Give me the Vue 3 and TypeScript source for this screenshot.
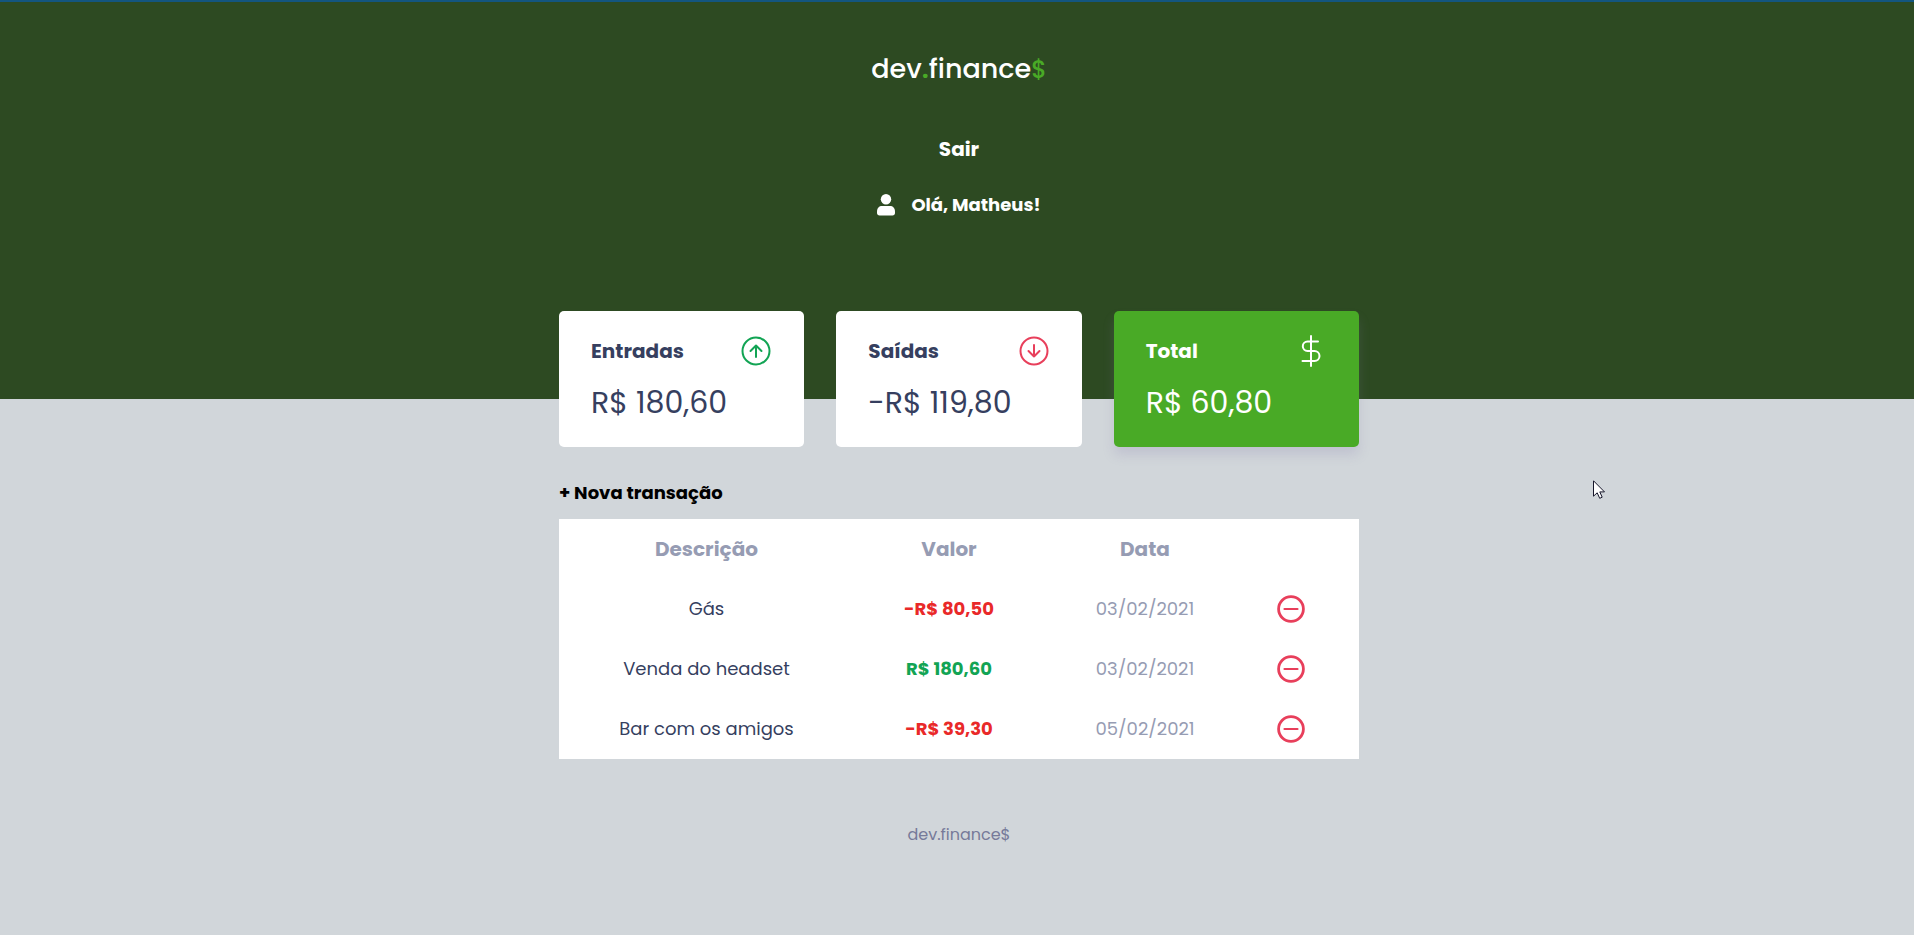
<script setup lang="ts">
interface Transaction {
  id: number
  description: string
  amount: number
  date: string
}

const userName = 'Matheus'

const transactions: Transaction[] = [
  { id: 1, description: 'Gás', amount: -8050, date: '03/02/2021' },
  { id: 2, description: 'Venda do headset', amount: 18060, date: '03/02/2021' },
  { id: 3, description: 'Bar com os amigos', amount: -3930, date: '05/02/2021' },
]

const sum = (items: Transaction[]): number => items.reduce((acc, t) => acc + t.amount, 0)
const incomes = sum(transactions.filter((t) => t.amount > 0))
const expenses = sum(transactions.filter((t) => t.amount < 0))
const total = incomes + expenses

function formatCurrency(cents: number): string {
  const sign = cents < 0 ? '-' : ''
  return `${sign}R$ ${(Math.abs(cents) / 100).toFixed(2).replace('.', ',')}`
}
</script>

<template>
  <div class="page">
    <header class="header">
      <h1 class="logo">dev<span class="dot">.</span>finance<span class="dollar">$</span></h1>
      <a class="logout" href="#">Sair</a>
      <div class="user">
        <svg class="user-icon" viewBox="0 0 18 22" aria-hidden="true">
          <circle cx="9" cy="5.2" r="5.2" />
          <path d="M0 17.5C0 14 2.200 12 5 12h8c2.800 0 5 2 5 5.500v1.500c0 1.500-1 2.500-2.500 2.500h-13C1 21.500 0 20.500 0 19z" />
        </svg>
        <span>Olá, {{ userName }}!</span>
      </div>
    </header>

    <main class="container">
      <section class="balance" aria-label="Balanço">
        <div class="card">
          <h2 class="card-title">
            <span>Entradas</span>
            <svg class="card-icon income" viewBox="0 0 32 32" aria-hidden="true">
              <circle cx="16" cy="16" r="13.500" />
              <path d="M16 22V10.500M10.500 16L16 10.500L21.500 16" />
            </svg>
          </h2>
          <p class="card-value">{{ formatCurrency(incomes) }}</p>
        </div>
        <div class="card">
          <h2 class="card-title">
            <span>Saídas</span>
            <svg class="card-icon expense" viewBox="0 0 32 32" aria-hidden="true">
              <circle cx="16" cy="16" r="13.500" />
              <path d="M16 10V21.500M10.500 16L16 21.500L21.500 16" />
            </svg>
          </h2>
          <p class="card-value">{{ formatCurrency(expenses) }}</p>
        </div>
        <div class="card total">
          <h2 class="card-title">
            <span>Total</span>
            <svg class="card-icon" viewBox="0 0 32 32" aria-hidden="true">
              <path d="M16 1V31M23 6.500H12.500a4.700 4.700 0 0 0 0 9.400H19.500a5 5 0 0 1 0 10H7.500" />
            </svg>
          </h2>
          <p class="card-value">{{ formatCurrency(total) }}</p>
        </div>
      </section>

      <section aria-label="Transações">
        <button class="new" type="button">+ Nova transação</button>
        <table class="table">
          <colgroup>
            <col />
            <col class="col-value" />
            <col class="col-date" />
            <col class="col-action" />
          </colgroup>
          <thead>
            <tr>
              <th scope="col">Descrição</th>
              <th scope="col">Valor</th>
              <th scope="col">Data</th>
              <td></td>
            </tr>
          </thead>
          <tbody>
            <tr v-for="t in transactions" :key="t.id">
              <td>{{ t.description }}</td>
              <td class="amount" :class="t.amount < 0 ? 'negative' : 'positive'">{{ formatCurrency(t.amount) }}</td>
              <td class="date">{{ t.date }}</td>
              <td class="action">
                <button class="remove" type="button" aria-label="Remover transação">
                  <svg viewBox="0 0 28 28" aria-hidden="true">
                    <circle cx="14" cy="14" r="12.400" stroke-width="2.800" />
                    <path d="M7.500 14H20.500" stroke-width="2.200" />
                  </svg>
                </button>
              </td>
            </tr>
          </tbody>
        </table>
      </section>
    </main>

    <footer class="footer">dev.finance$</footer>

    <svg class="pointer" viewBox="0 0 12 19" aria-hidden="true">
      <path d="M.5.8V16.200L4.200 12.800L6.700 18.300L9.200 17.200L6.800 11.900H11.500Z" />
    </svg>
  </div>
</template>

<style>
body {
  margin: 0;
  background: #d1d6da;
}
</style>

<style scoped>
.page {
  position: relative;
  min-height: 100vh;
  box-sizing: border-box;
  overflow: hidden;
  background: #d1d6da;
  color: #363f5f;
  font-family: Poppins, Inter, "Open Sans", sans-serif;
  font-size: 18px;
}

.header {
  display: flex;
  flex-direction: column;
  align-items: center;
  box-sizing: border-box;
  height: 399px;
  padding: 47px 0 0 4px;
  border-top: 2px solid #135680;
  background: #2d4a22;
  color: #fff;
}

.logo {
  margin: 0;
  font-size: 27px;
  font-weight: 500;
  line-height: 40px;
}

.dot,
.dollar {
  color: #49aa26;
}

.dot {
  font-weight: 600;
}

.dollar {
  font-size: 24px;
}

.logout {
  margin-top: 44px;
  color: inherit;
  font-size: 20px;
  font-weight: 700;
  line-height: 30px;
  text-decoration: none;
}

.user {
  display: flex;
  align-items: center;
  gap: 16px;
  margin-top: 26px;
  font-weight: 700;
  line-height: 30px;
}

.user-icon {
  width: 18px;
  height: 22px;
  fill: #fff;
}

.container {
  width: min(90vw, 800px);
  margin: -88px auto 0;
  padding-left: 4px;
}

.balance {
  display: grid;
  grid-template-columns: repeat(3, 1fr);
  gap: 32px;
}

.card {
  padding: 24px 32px;
  border-radius: 5px;
  background: #fff;
}

.card.total {
  background: #49aa26;
  color: #fff;
  box-shadow: 0 8px 12px rgba(130, 120, 170, 0.2);
}

.card-title {
  display: flex;
  align-items: center;
  justify-content: space-between;
  margin: 0;
  font-size: 20px;
  font-weight: 700;
  line-height: 32px;
}

.card-icon {
  width: 32px;
  height: 32px;
  fill: none;
  stroke: currentColor;
  stroke-width: 2;
  stroke-linecap: round;
  stroke-linejoin: round;
}

.income {
  color: #12a454;
}

.expense {
  color: #e83f5b;
}

.card-value {
  margin: 16px 0 0;
  font-size: 30px;
  font-weight: 400;
  line-height: 40px;
  white-space: nowrap;
}

.new {
  display: block;
  margin: 31px 0 11px;
  padding: 0;
  border: 0;
  background: none;
  color: #000;
  font: inherit;
  font-weight: 700;
  line-height: 30px;
  cursor: pointer;
}

.table {
  width: 100%;
  border-collapse: collapse;
  table-layout: fixed;
  background: #fff;
  text-align: center;
}

.col-value {
  width: 190px;
}

.col-date {
  width: 202px;
}

.col-action {
  width: 113px;
}

.table th,
.table td {
  height: 60px;
  padding: 0;
  line-height: 28px;
  white-space: nowrap;
}

.table th {
  color: #969cb3;
  font-size: 20px;
  font-weight: 700;
}

.amount {
  font-weight: 700;
}

.negative {
  color: #e92929;
}

.positive {
  color: #12a454;
}

.date {
  color: #969cb3;
}

.table .action {
  padding-left: 31px;
}

.remove {
  display: block;
  width: 28px;
  height: 28px;
  padding: 0;
  border: 0;
  background: none;
  cursor: pointer;
}

.remove svg {
  display: block;
  width: 28px;
  height: 28px;
  fill: none;
  stroke: #e83f5b;
  stroke-linecap: round;
}

.footer {
  padding: 61px 0 60px 4px;
  color: #767a99;
  font-size: 16px;
  line-height: 30px;
  text-align: center;
}

.pointer {
  position: absolute;
  top: 480px;
  left: 1593px;
  width: 12px;
  height: 19px;
  fill: #fff;
  stroke: #17172b;
  stroke-width: 1;
}
</style>
